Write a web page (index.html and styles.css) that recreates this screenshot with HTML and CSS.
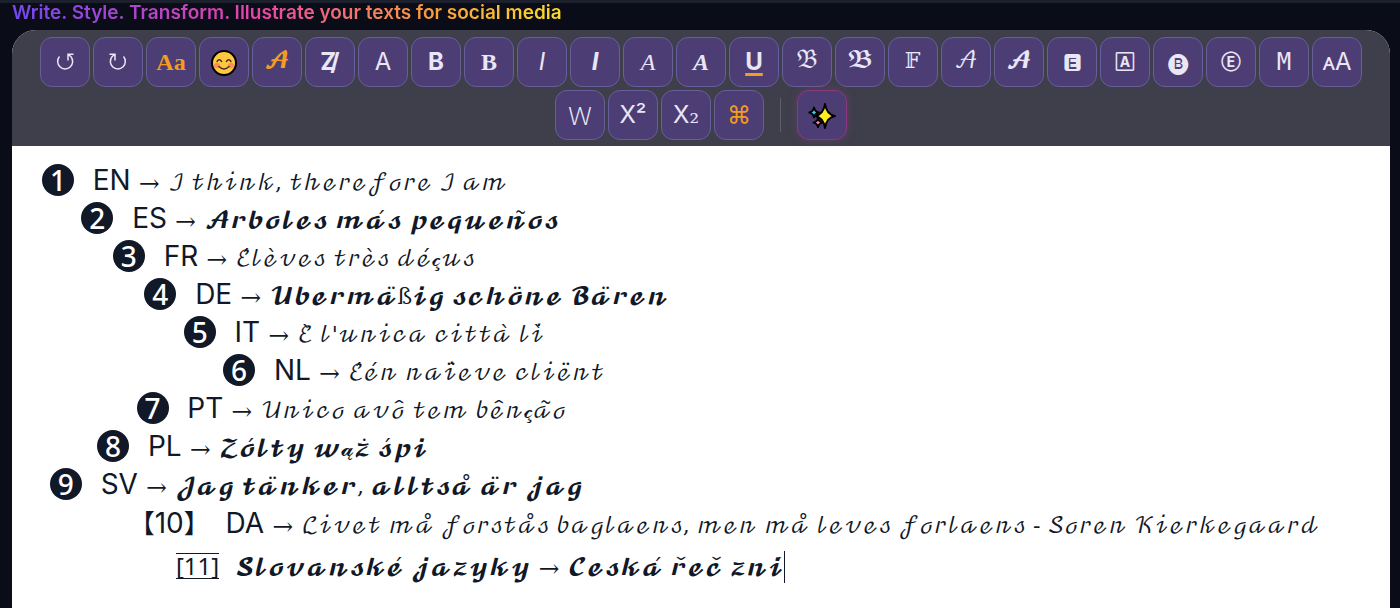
FILE: index.html
```
<!DOCTYPE html>
<html lang="en">
<head>
    <meta charset="UTF-8">
    <meta name="viewport" content="width=device-width, initial-scale=1.0">
    <title>Text editor</title>
    <link rel="stylesheet" href="styles.css">
</head>
<body>
<main class="page">
    <h1 class="tagline">Write. Style. Transform. Illustrate your texts for social media</h1>
    <section class="editor">
        <div class="toolbar" role="toolbar" aria-label="Text styles">
            <button type="button" class="tool" aria-label="Undo">
                <svg class="arrow-icon" viewBox="0 0 20 20">
                    <path d="M4.500 4.500A7.500 7.500 0 1 0 16 4.700L13.500 2.500M18.500 2.200H13V8.500"/>
                </svg>
            </button>
            <button type="button" class="tool" aria-label="Redo">
                <svg class="arrow-icon" viewBox="0 0 20 20">
                    <path d="M15.500 4.500A7.500 7.500 0 1 1 4 4.700L6.500 2.500M1.500 2.200H7V8.500"/>
                </svg>
            </button>
            <button type="button" class="tool accent serif bold" aria-label="Fonts">Aa</button>
            <button type="button" class="tool" aria-label="Emoji">
                <svg class="icon" viewBox="0 0 28 28">
                    <circle cx="14" cy="15" r="12" fill="#ffc83d" stroke="#000" stroke-width="2"/>
                    <circle cx="7" cy="17.500" r="2.800" fill="#ff8a5c"/>
                    <circle cx="21" cy="17.500" r="2.800" fill="#ff8a5c"/>
                    <path d="M7 13.500q2.300-3.600 4.600 0M16.400 13.500q2.300-3.600 4.600 0M9 18.500q5 5 10 0" fill="none" stroke="#402a32" stroke-width="1.400" stroke-linecap="round"/>
                </svg>
            </button>
            <button type="button" class="tool accent math" aria-label="Calligraphy">𝓐</button>
            <button type="button" class="tool bold" aria-label="Clear style">Z<span class="slash">/</span></button>
            <button type="button" class="tool" aria-label="Sans">A</button>
            <button type="button" class="tool bold" aria-label="Sans bold">B</button>
            <button type="button" class="tool serif bold" aria-label="Serif bold">B</button>
            <button type="button" class="tool italic" aria-label="Sans italic">I</button>
            <button type="button" class="tool italic bold" aria-label="Sans bold italic">I</button>
            <button type="button" class="tool serif italic" aria-label="Serif italic">A</button>
            <button type="button" class="tool serif italic bold" aria-label="Serif bold italic">A</button>
            <button type="button" class="tool bold underline" aria-label="Underline">U</button>
            <button type="button" class="tool math" aria-label="Fraktur">𝔅</button>
            <button type="button" class="tool math" aria-label="Fraktur bold">𝕭</button>
            <button type="button" class="tool math" aria-label="Double struck">𝔽</button>
            <button type="button" class="tool math" aria-label="Script">𝒜</button>
            <button type="button" class="tool math" aria-label="Script bold">𝓐</button>
            <button type="button" class="tool filled" aria-label="Filled square">🅴</button>
            <button type="button" class="tool framed" aria-label="Square">🄰</button>
            <button type="button" class="tool filled" aria-label="Filled circle">🅑</button>
            <button type="button" class="tool framed" aria-label="Circle">Ⓔ</button>
            <button type="button" class="tool mono" aria-label="Monospace">M</button>
            <button type="button" class="tool" aria-label="Small caps">ᴀA</button>
            <button type="button" class="tool wide" aria-label="Wide">Ｗ</button>
            <button type="button" class="tool" aria-label="Superscript">X²</button>
            <button type="button" class="tool" aria-label="Subscript">X<span class="sub">₂</span></button>
            <button type="button" class="tool accent" aria-label="Symbols">⌘</button>
            <span class="separator"></span>
            <button type="button" class="tool magic" aria-label="Magic">
                <svg class="icon" viewBox="0 0 28 28" stroke="#000" stroke-width="1.800" stroke-linejoin="round">
                    <path d="M17 3q1.500 10.500 10 12q-8.500 1.500-10 12q-1.500-10.500-10-12q8.500-1.500 10-12z" fill="#ffee1f"/>
                    <path d="M6 6.500q.8 4.200 4.800 5q-4 .8-4.800 5q-.8-4.200-4.800-5q4-.8 4.800-5z" fill="#35c8f0"/>
                    <path d="M10 17q.8 3.800 4.500 4.600q-3.700.8-4.500 4.600q-.8-3.800-4.500-4.600q3.700-.8 4.500-4.600z" fill="#ff86b4"/>
                </svg>
            </button>
        </div>
        <div class="text" role="textbox" aria-multiline="true" aria-label="Text" contenteditable="true" spellcheck="false">
            <p><span class="num">1</span>  EN <span class="arrow">→</span> <span class="script">ℐ 𝓉𝒽𝒾𝓃𝓀, 𝓉𝒽ℯ𝓇ℯ𝒻ℴ𝓇ℯ ℐ 𝒶𝓂</span></p>
            <p>     <span class="num">2</span>  ES <span class="arrow">→</span> <span class="script">𝓐𝓻𝓫𝓸𝓵𝓮𝓼 𝓶𝓪́𝓼 𝓹𝓮𝓺𝓾𝓮𝓷̃𝓸𝓼</span></p>
            <p>         <span class="num">3</span>  FR <span class="arrow">→</span> <span class="script">ℰ́𝓁ℯ̀𝓋ℯ𝓈 𝓉𝓇ℯ̀𝓈 𝒹ℯ́𝒸̧𝓊𝓈</span></p>
            <p>             <span class="num">4</span>  DE <span class="arrow">→</span> <span class="script">𝓤𝓫𝓮𝓻𝓶𝓪̈ß𝓲𝓰 𝓼𝓬𝓱𝓸̈𝓷𝓮 𝓑𝓪̈𝓻𝓮𝓷</span></p>
            <p>                  <span class="num">5</span>  IT <span class="arrow">→</span> <span class="script">ℰ̀ 𝓁'𝓊𝓃𝒾𝒸𝒶 𝒸𝒾𝓉𝓉𝒶̀ 𝓁𝒾̀</span></p>
            <p>                       <span class="num">6</span>  NL <span class="arrow">→</span> <span class="script">ℰ́ℯ́𝓃 𝓃𝒶𝒾̈ℯ𝓋ℯ 𝒸𝓁𝒾ℯ̈𝓃𝓉</span></p>
            <p>            <span class="num">7</span>  PT <span class="arrow">→</span> <span class="script">𝒰𝓃𝒾𝒸ℴ 𝒶𝓋ℴ̂ 𝓉ℯ𝓂 𝒷ℯ̂𝓃𝒸̧𝒶̃ℴ</span></p>
            <p>       <span class="num">8</span>  PL <span class="arrow">→</span> <span class="script">𝓩𝓸́𝓵𝓽𝔂 𝔀𝓪̨𝔃̇ 𝓼́𝓹𝓲</span></p>
            <p> <span class="num">9</span>  SV <span class="arrow">→</span> <span class="script">𝓙𝓪𝓰 𝓽𝓪̈𝓷𝓴𝓮𝓻, 𝓪𝓵𝓵𝓽𝓼𝓪̊ 𝓪̈𝓻 𝓳𝓪𝓰</span></p>
            <p class="tall">           <span class="bracket">【</span>10<span class="bracket">】</span>  DA <span class="arrow">→</span> <span class="script">ℒ𝒾𝓋ℯ𝓉 𝓂𝒶̊ 𝒻ℴ𝓇𝓈𝓉𝒶̊𝓈 𝒷𝒶ℊ𝓁𝒶ℯ𝓃𝓈, 𝓂ℯ𝓃 𝓂𝒶̊ 𝓁ℯ𝓋ℯ𝓈 𝒻ℴ𝓇𝓁𝒶ℯ𝓃𝓈 - 𝒮ℴ𝓇ℯ𝓃 𝒦𝒾ℯ𝓇𝓀ℯℊ𝒶𝒶𝓇𝒹</span></p>
            <p class="taller">                 <span class="boxed">[11]</span>  <span class="script">𝓢𝓵𝓸𝓿𝓪𝓷𝓼𝓴𝓮́ 𝓳𝓪𝔃𝔂𝓴𝔂</span> <span class="arrow">→</span> <span class="script">𝓒𝓮𝓼𝓴𝓪́ 𝓻̌𝓮𝓬̌ 𝔃𝓷𝓲́</span><span class="caret"></span></p>
        </div>
    </section>
</main>
</body>
</html>
```
FILE: styles.css
```
:root {
    --page-bg: #0a0d18;
    --toolbar-bg: #3e3f4b;
    --tool-bg: #4c3d75;
    --tool-border: #675f99;
    --accent: #f39c1f;
    --light: #e9e6f5;
    --ink: #111827;
}

* {
    box-sizing: border-box;
}

body {
    margin: 0;
    min-height: 100vh;
    border-top: 3px solid #1b202c;
    background: var(--page-bg);
    font-family: Inter, sans-serif;
    display: flex;
}

.page {
    flex: 1;
    display: flex;
    flex-direction: column;
    align-items: flex-start;
    padding: 0 10px 0 12px;
}

.tagline {
    margin: 0;
    padding-bottom: 8px;
    font-size: 19px;
    line-height: 19px;
    font-weight: 600;
    color: transparent;
    background: linear-gradient(90deg, #7446f0, #e845a8 45%, #f9993f 75%, #fadb2f);
    background-clip: text;
}

.editor {
    align-self: stretch;
    flex: 1;
    display: flex;
    flex-direction: column;
    background: #fff;
    border-radius: 24px 24px 0 0;
    overflow: hidden;
}

.toolbar {
    display: flex;
    flex-wrap: wrap;
    justify-content: center;
    gap: 3px;
    padding: 7px 24px 6px;
    background: var(--toolbar-bg);
}

.tool {
    width: 50px;
    height: 50px;
    padding: 0;
    display: flex;
    align-items: center;
    justify-content: center;
    border: 1px solid var(--tool-border);
    border-radius: 12px;
    background: var(--tool-bg);
    color: var(--light);
    font-family: Inter, "Noto Sans", "DejaVu Sans", sans-serif;
    font-size: 24px;
    line-height: 28px;
    cursor: pointer;
}

.serif {
    font-family: "Liberation Serif", serif;
}

.math {
    font-family: "DejaVu Math TeX Gyre", serif;
    font-size: 22px;
}

.mono {
    font-family: "DejaVu Sans Mono", monospace;
}

.wide {
    font-family: "Noto Sans CJK JP", sans-serif;
    font-weight: 300;
}

.framed {
    font-size: 14px;
    font-weight: 700;
}

.filled {
    font-size: 20px;
}

.bold {
    font-weight: 700;
}

.italic {
    font-style: italic;
}

.underline {
    text-decoration: underline var(--accent) 3px;
    text-underline-offset: 3px;
}

.accent {
    color: var(--accent);
}

.slash {
    margin-left: -6px;
}

.sub {
    font-family: "DejaVu Serif", serif;
}

.icon {
    width: 28px;
    height: 28px;
}

.arrow-icon {
    width: 20px;
    height: 20px;
    fill: none;
    stroke: var(--light);
    stroke-width: 1.5;
}

.separator {
    width: 1px;
    height: 34px;
    margin: 8px 13px;
    background: #5d5e6c;
}

.magic {
    border-color: #8a3a7c;
    box-shadow: 0 0 8px #8a3a7c80;
}

.text {
    flex: 1;
    padding: 15px 30px;
    outline: 0;
    color: var(--ink);
    font-size: 28px;
    line-height: 38px;
}

.text p {
    margin: 0;
    white-space: pre-wrap;
}

.text .tall {
    line-height: 40px;
}

.text .taller {
    line-height: 44px;
}

.num {
    display: inline-block;
    width: 32px;
    height: 32px;
    margin: 3px 3px 3px 0;
    border-radius: 50%;
    background: var(--ink);
    color: #fff;
    font-family: "Noto Sans", sans-serif;
    font-weight: 500;
    line-height: 32px;
    text-align: center;
    vertical-align: top;
}

.arrow,
.script {
    font-family: "DejaVu Math TeX Gyre", Inter, serif;
    font-size: 22px;
    line-height: 1;
}

.bracket {
    font-family: "Noto Sans CJK JP", sans-serif;
    font-size: 26px;
    line-height: 1;
}

.boxed {
    display: inline-block;
    border: solid var(--ink);
    border-width: 1px 0;
    font-family: "Noto Sans", sans-serif;
    font-size: 24px;
    line-height: 24px;
}

.caret {
    display: inline-block;
    height: 32px;
    border-left: 1px solid var(--ink);
    vertical-align: middle;
}
```
